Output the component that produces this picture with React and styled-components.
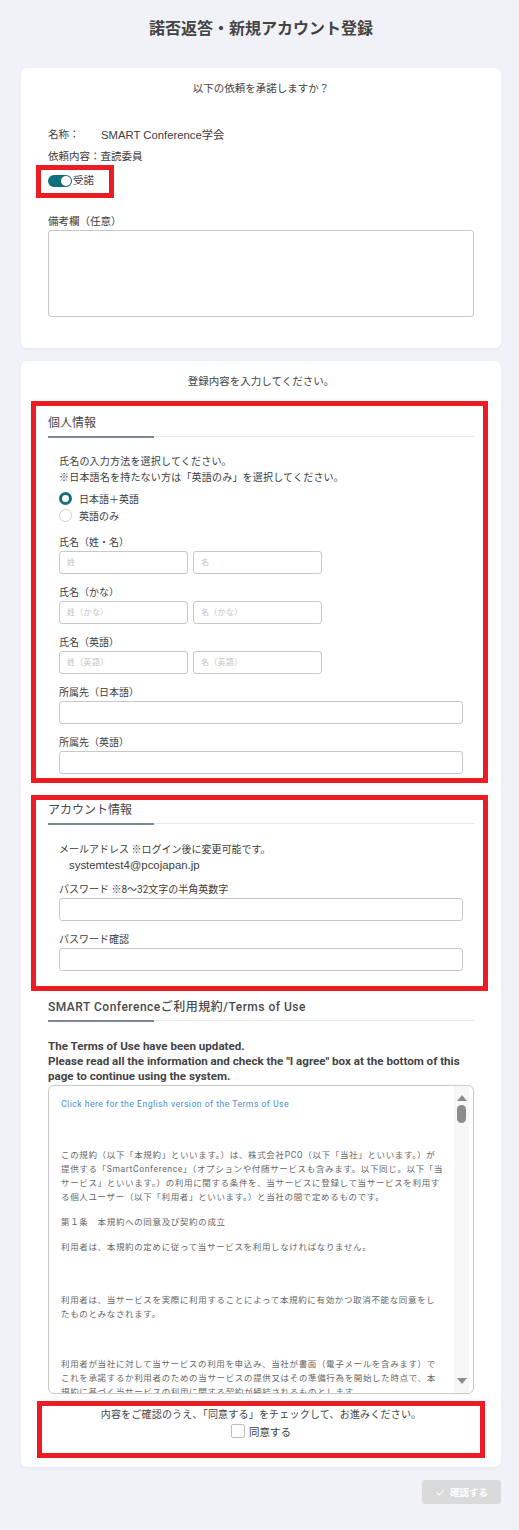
import React from 'react';
import styled, { createGlobalStyle } from 'styled-components';
import { Check } from 'lucide-react';

const GlobalStyle = createGlobalStyle`
  html, body { margin: 0; padding: 0; background: #f1f2f7; }
  body { font-family: Roboto, "Noto Sans CJK JP", sans-serif; color: #444; }
  * { box-sizing: border-box; }
`;

const Page = styled.div`
  width: 519px;
  min-height: 1530px;
  padding: 0 18px 24px 21px;
`;

const Title = styled.h1`
  margin: 0 0 27px;
  padding-top: 17px;
  line-height: 24px;
  text-align: center;
  font-size: 16px;
  font-weight: 700;
  color: #444;
`;

const Card = styled.section`
  background: #fff;
  border-radius: 6px;
  box-shadow: 0 1px 3px rgba(40, 50, 80, 0.06);
  padding: 13px 27px ${p => p.$bottom}px;
  margin-top: ${p => p.$top || 0}px;
`;

const CardHeader = styled.div`
  text-align: center;
  font-size: 10.5px;
  line-height: 16px;
  color: #444;
`;

const InfoRow = styled.div`
  display: flex;
  height: 16px;
  font-size: 10.5px;
  line-height: 16px;
  margin-top: ${p => p.$top}px;
  color: #3d3d3d;
`;

const InfoKey = styled.span`
  width: ${p => p.$w ? `${p.$w}px` : 'auto'};
`;

const InfoValue = styled.span`
  font-family: "Liberation Sans", "Noto Sans CJK JP", sans-serif;
  font-size: 11.3px;
  line-height: 16px;
`;

const Highlight = styled.div`
  border: 5px solid #ec1c24;
  margin: ${p => p.$margin};
  padding: ${p => p.$padding};
`;

const ToggleBox = styled(Highlight)`
  width: 78px;
  display: flex;
  align-items: center;
  gap: 1px;
  font-size: 10.5px;
  line-height: 12px;
`;

const Toggle = styled.span`
  width: 24px;
  height: 12px;
  border-radius: 6px;
  background: #10707a;
  display: flex;
  justify-content: flex-end;
  align-items: center;
  padding: 1px;
`;

const Knob = styled.span`
  width: 10px;
  height: 10px;
  border-radius: 50%;
  background: #fff;
`;

const Label = styled.div`
  font-size: ${p => p.$size || 10}px;
  line-height: ${p => p.$lh || 17}px;
  margin-top: ${p => p.$top || 0}px;
  color: #3d3d3d;
`;

const TextArea = styled.textarea`
  display: block;
  width: 100%;
  height: 87px;
  border: 1px solid #c8c8c8;
  border-radius: 3px;
  resize: none;
  margin: 0;
  outline: none;
`;

const SectionHeading = styled.h2`
  position: relative;
  margin: ${p => p.$top || 0}px 0 0;
  font-size: 12px;
  font-weight: ${p => p.$bold ? 500 : 400};
  letter-spacing: ${p => p.$spacing || 0}px;
  line-height: 20px;
  padding-bottom: 3px;
  border-bottom: 1px solid #e6e9ee;
  margin-bottom: 1px;
  color: #4a4a4a;
  &::after {
    content: '';
    position: absolute;
    left: 0;
    bottom: -2px;
    width: 106px;
    height: 2px;
    background: #7d8791;
  }
`;

const Fields = styled.div`
  padding: 0 11px;
  margin-top: ${p => p.$top}px;
`;

const Intro = styled.div`
  font-size: 10px;
  line-height: 16px;
  letter-spacing: 0.2px;
  color: #3d3d3d;
`;

const RadioGroup = styled.div`
  margin-top: 4px;
`;

const RadioRow = styled.label`
  display: flex;
  align-items: center;
  gap: 7px;
  height: 17px;
  font-size: 10px;
  color: #3d3d3d;
`;

const RadioCircle = styled.span`
  width: 13px;
  height: 13px;
  border-radius: 50%;
  background: #fff;
  border: ${p => p.$on ? '3px solid #16707a' : '1px solid #cfcfcf'};
`;

const Field = styled.div`
  margin-top: ${p => p.$top ?? 10}px;
`;

const InputRow = styled.div`
  display: flex;
  gap: 5px;
`;

const Input = styled.input`
  display: block;
  width: ${p => p.$w ? `${p.$w}px` : '100%'};
  height: 23px;
  border: 1px solid #c8c8c8;
  border-radius: 3px;
  padding: 0 7px;
  margin: 0;
  font-family: Roboto, "Noto Sans CJK JP", sans-serif;
  font-size: 8px;
  letter-spacing: 0.3px;
  outline: none;
  &::placeholder { color: #c3c3c3; }
`;

const Email = styled.div`
  padding-left: 10px;
  font-family: "Liberation Sans", sans-serif;
  font-size: 11.4px;
  line-height: 14px;
  color: #3d3d3d;
`;

const Notice = styled.p`
  margin: 18px 0 0;
  font-family: Roboto, "Noto Sans CJK JP", sans-serif;
  font-weight: 700;
  font-size: 11.6px;
  line-height: 15px;
  color: #444;
`;

const ScrollBox = styled.div`
  margin-top: 1px;
  height: 309px;
  border: 1px solid #c9c9c9;
  border-radius: 6px;
  display: flex;
  overflow: hidden;
  background: #fff;
`;

const ScrollContent = styled.div`
  flex: 1;
  padding: 11px 0 0 12px;
  font-size: 8.5px;
  letter-spacing: 0.65px;
  line-height: 14px;
  color: #666;
  white-space: nowrap;
  overflow: hidden;
`;

const TermsLink = styled.a`
  color: #4a8fd6;
  text-decoration: none;
  letter-spacing: 0.45px;
  font-size: 8.7px;
`;

const Para = styled.p`
  margin: ${p => p.$top}px 0 0;
`;

const Scrollbar = styled.div`
  width: 15px;
  margin-right: 4px;
  background: #f7f7f7;
  display: flex;
  flex-direction: column;
  align-items: center;
  padding-top: 9px;
`;

const Arrow = styled.span`
  width: 0;
  height: 0;
  border-left: 5px solid transparent;
  border-right: 5px solid transparent;
  ${p => p.$down
    ? 'border-top: 6px solid #8c8c8c; margin-top: auto; margin-bottom: 9px;'
    : 'border-bottom: 6px solid #8c8c8c;'}
`;

const Thumb = styled.span`
  width: 9px;
  height: 18px;
  border-radius: 5px;
  background: #8c8c8c;
  margin-top: 4px;
`;

const AgreeBox = styled(Highlight)`
  text-align: center;
`;

const AgreeText = styled.div`
  font-size: 10px;
  line-height: 16px;
  letter-spacing: 0.2px;
  color: #444;
`;

const AgreeRow = styled.label`
  display: flex;
  justify-content: center;
  align-items: center;
  gap: 4px;
  height: 16px;
  font-size: 10.5px;
  color: #3d3d3d;
`;

const CheckBox = styled.span`
  width: 14px;
  height: 14px;
  border: 1px solid #bdbdbd;
  border-radius: 2px;
  background: #fff;
`;

const ButtonRow = styled.div`
  display: flex;
  justify-content: flex-end;
  margin-top: 13px;
`;

const ConfirmButton = styled.button`
  width: 79px;
  height: 24px;
  border: none;
  border-radius: 3px;
  background: #dadada;
  color: #fff;
  font-family: Roboto, "Noto Sans CJK JP", sans-serif;
  font-weight: 700;
  font-size: 9.5px;
  display: flex;
  align-items: center;
  justify-content: center;
  gap: 4px;
  padding: 0;
`;

const nameFields = [
  { label: '氏名（姓・名）', a: '姓', b: '名' },
  { label: '氏名（かな）', a: '姓（かな）', b: '名（かな）' },
  { label: '氏名（英語）', a: '姓（英語）', b: '名（英語）' },
];

export default function App() {
  return (
    <>
      <GlobalStyle />
      <Page>
        <Title>諾否返答・新規アカウント登録</Title>

        <Card $bottom={31}>
          <CardHeader>以下の依頼を承諾しますか？</CardHeader>
          <InfoRow $top={30}>
            <InfoKey $w={53}>名称：</InfoKey>
            <InfoValue>SMART Conference学会</InfoValue>
          </InfoRow>
          <InfoRow $top={6}>
            <InfoKey>依頼内容：</InfoKey>
            <span>査読委員</span>
          </InfoRow>
          <ToggleBox $margin="0 0 0 -12px" $padding="5px 0 6px 7px">
            <Toggle><Knob /></Toggle>
            <span>受諾</span>
          </ToggleBox>
          <Label $top={16} $lh={16} $size={10.5}>備考欄（任意）</Label>
          <TextArea />
        </Card>

        <Card $top={13} $bottom={9}>
          <CardHeader>登録内容を入力してください。</CardHeader>

          <Highlight $margin="11px -14px 0 -17px" $padding="7px 9px 4px 12px">
            <SectionHeading>個人情報</SectionHeading>
            <Fields $top={17}>
              <Intro>
                氏名の入力方法を選択してください。<br />
                ※日本語名を持たない方は「英語のみ」を選択してください。
              </Intro>
              <RadioGroup>
                <RadioRow><RadioCircle $on />日本語＋英語</RadioRow>
                <RadioRow><RadioCircle />英語のみ</RadioRow>
              </RadioGroup>
              {nameFields.map(f => (
                <Field key={f.label}>
                  <Label>{f.label}</Label>
                  <InputRow>
                    <Input $w={129} placeholder={f.a} />
                    <Input $w={129} placeholder={f.b} />
                  </InputRow>
                </Field>
              ))}
              <Field>
                <Label>所属先（日本語）</Label>
                <Input />
              </Field>
              <Field>
                <Label>所属先（英語）</Label>
                <Input />
              </Field>
            </Fields>
          </Highlight>

          <Highlight $margin="12px -14px 0 -17px" $padding="0 9px 15px 12px">
            <SectionHeading>アカウント情報</SectionHeading>
            <Fields $top={18}>
              <Label $lh={16}>メールアドレス ※ログイン後に変更可能です。</Label>
              <Email>systemtest4@pcojapan.jp</Email>
              <Field $top={9}>
                <Label>パスワード ※8〜32文字の半角英数字</Label>
                <Input type="password" />
              </Field>
              <Field>
                <Label>パスワード確認</Label>
                <Input type="password" />
              </Field>
            </Fields>
          </Highlight>

          <SectionHeading $top={6} $bold $spacing={0.5}>SMART Conferenceご利用規約/Terms of Use</SectionHeading>
          <Notice>
            The Terms of Use have been updated.<br />
            Please read all the information and check the "I agree" box at the bottom of this<br />
            page to continue using the system.
          </Notice>
          <ScrollBox>
            <ScrollContent>
              <TermsLink href="#">Click here for the English version of the Terms of Use</TermsLink>
              <Para $top={37}>
                この規約（以下「本規約」といいます。）は、株式会社PCO（以下「当社」といいます。）が<br />
                提供する「SmartConference」（オプションや付随サービスも含みます。以下同じ。以下「当<br />
                サービス」といいます。）の利用に関する条件を、当サービスに登録して当サービスを利用す<br />
                る個人ユーザー（以下「利用者」といいます。）と当社の間で定めるものです。
              </Para>
              <Para $top={11}>第１条　本規約への同意及び契約の成立</Para>
              <Para $top={11}>利用者は、本規約の定めに従って当サービスを利用しなければなりません。</Para>
              <Para $top={39}>
                利用者は、当サービスを実際に利用することによって本規約に有効かつ取消不能な同意をし<br />
                たものとみなされます。
              </Para>
              <Para $top={36}>
                利用者が当社に対して当サービスの利用を申込み、当社が書面（電子メールを含みます）で<br />
                これを承諾するか利用者のための当サービスの提供又はその準備行為を開始した時点で、本<br />
                規約に基づく当サービスの利用に関する契約が締結されるものとします。
              </Para>
            </ScrollContent>
            <Scrollbar>
              <Arrow />
              <Thumb />
              <Arrow $down />
            </Scrollbar>
          </ScrollBox>

          <AgreeBox $margin="7px -11px 0 -11px" $padding="1px 0 14px">
            <AgreeText>内容をご確認のうえ、「同意する」をチェックして、お進みください。</AgreeText>
            <AgreeRow><CheckBox />同意する</AgreeRow>
          </AgreeBox>
        </Card>

        <ButtonRow>
          <ConfirmButton type="button">
            <Check size={11} strokeWidth={2.2} />
            確認する
          </ConfirmButton>
        </ButtonRow>
      </Page>
    </>
  );
}
